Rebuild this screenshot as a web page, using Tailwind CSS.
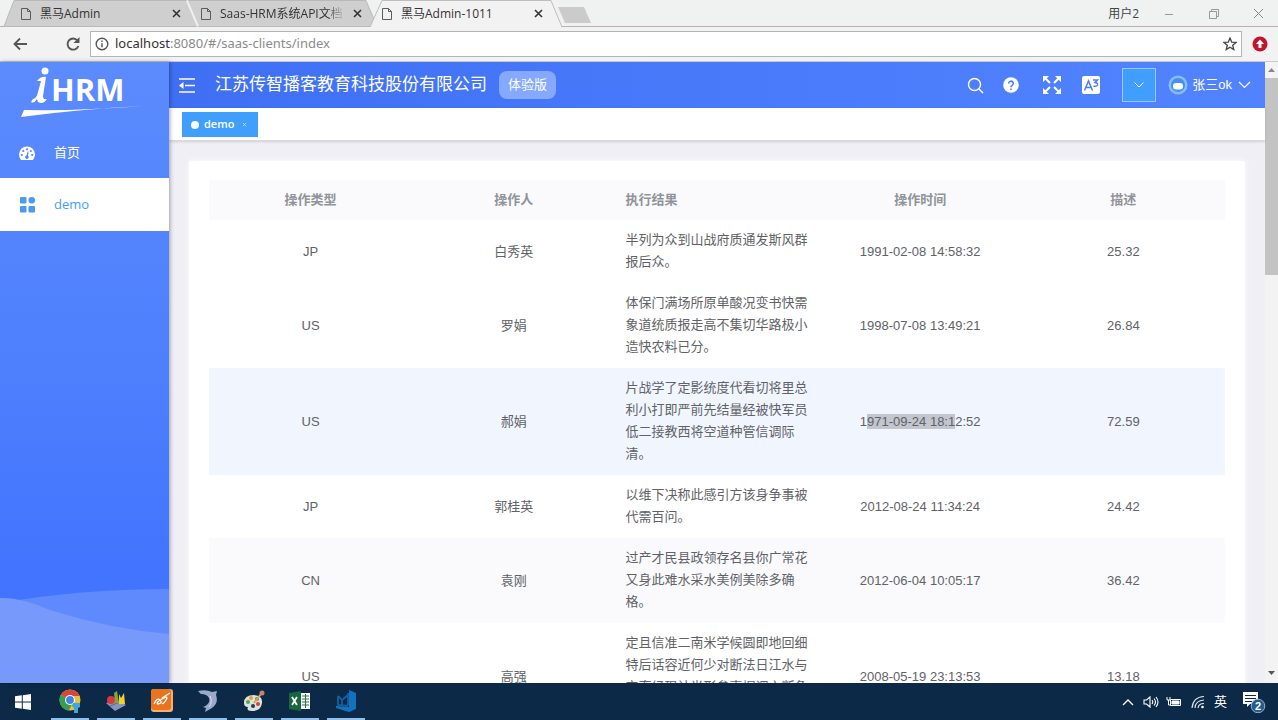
<!DOCTYPE html>
<html lang="zh-CN">
<head>
<meta charset="utf-8">
<title>黑马Admin-1011</title>
<script src="https://cdn.jsdelivr.net/npm/@tailwindcss/browser@4"></script>
</head>
<body class="flex h-screen flex-col overflow-hidden bg-[#f2f1f1] font-['Liberation_Sans','Noto_Sans_CJK_SC',sans-serif] text-[13px] text-[#606266]">

<!-- Browser tab strip -->
<div class="relative flex h-[27px] shrink-0 items-center bg-[#f0f2f2] pl-5 font-['Open_Sans','Noto_Sans_CJK_SC',sans-serif] text-xs text-[#333]">
  <svg class="absolute top-0 left-0 w-full" height="27" aria-hidden="true">
    <path d="M0 26.500H4000" stroke="#b4b4b4"/>
    <path d="M4 26.500L14 .5H187L198 26.500Z" fill="#cfcfcf" stroke="#b9b9b9"/>
    <path d="M198 26.500L188 .5H366L377 26.500Z" fill="#cfcfcf" stroke="#b9b9b9"/>
    <path d="M187 .5l11 26" stroke="#f0f0f0" stroke-width="2"/>
    <path d="M370 27L382 .5H551L562 27Z" fill="#f3f2f2" stroke="#bdbdbd"/>
    <path d="M371 27H561" stroke="#f3f2f2" stroke-width="2"/>
    <path d="M558 7h26l7 16h-26Z" fill="#cbcbcb"/>
  </svg>
  <div class="relative flex w-[180px] items-center pr-4">
    <svg class="mr-2 shrink-0" width="12" height="14" viewBox="0 0 12 14" fill="none" stroke="#5c5c5c"><path d="M1.500 1.500h6l3 3v8h-9zM7.500 1.500v3h3"/></svg>
    <a href="#" class="flex-1 truncate">黑马Admin</a>
    <button class="flex size-4 items-center justify-center" aria-label="关闭"><svg width="9" height="9" viewBox="0 0 9 9" stroke="#333" stroke-width="1.600"><path d="M1 1l7 7M8 1l-7 7"/></svg></button>
  </div>
  <div class="relative flex w-[181px] items-center pr-4">
    <svg class="mr-2 shrink-0" width="12" height="14" viewBox="0 0 12 14" fill="none" stroke="#5c5c5c"><path d="M1.500 1.500h6l3 3v8h-9zM7.500 1.500v3h3"/></svg>
    <a href="#" class="mr-1 flex-1 overflow-hidden mask-r-from-85% whitespace-nowrap">Saas-HRM系统API文档</a>
    <button class="flex size-4 items-center justify-center" aria-label="关闭"><svg width="9" height="9" viewBox="0 0 9 9" stroke="#333" stroke-width="1.600"><path d="M1 1l7 7M8 1l-7 7"/></svg></button>
  </div>
  <div class="relative flex w-[165px] items-center">
    <svg class="mr-2 shrink-0" width="12" height="14" viewBox="0 0 12 14" fill="none" stroke="#5c5c5c"><path d="M1.500 1.500h6l3 3v8h-9zM7.500 1.500v3h3"/></svg>
    <a href="#" class="flex-1 truncate">黑马Admin-1011</a>
    <button class="flex size-4 items-center justify-center" aria-label="关闭"><svg width="9" height="9" viewBox="0 0 9 9" stroke="#333" stroke-width="1.600"><path d="M1 1l7 7M8 1l-7 7"/></svg></button>
  </div>
  <div class="relative ml-auto flex items-center gap-6 pr-3.5 text-[#444]">
    <span>用户2</span>
    <button class="ml-[-3px]" aria-label="最小化"><svg width="18" height="12" viewBox="0 0 18 12" stroke="#999"><path d="M5 6.500h8"/></svg></button>
    <button aria-label="还原"><svg width="20" height="12" viewBox="0 0 20 12" fill="none" stroke="#999"><path d="M7.500 3.500h7v7h-7zM9.500 3.500v-2h7v7h-2"/></svg></button>
    <button aria-label="关闭窗口"><svg width="18" height="12" viewBox="0 0 18 12" stroke="#888"><path d="M8 1l9 9M17 1l-9 9"/></svg></button>
  </div>
</div>

<!-- Address bar -->
<div class="flex h-[35px] shrink-0 items-center border-b border-[#c9c9cc] bg-[#f3f2f2] pr-2.5 pl-3">
  <button class="mr-9" aria-label="后退"><svg width="16" height="14" viewBox="0 0 16 14" fill="none" stroke="#555" stroke-width="1.800"><path d="M15 7H3M8 1.500L2.500 7L8 12.500"/></svg></button>
  <button class="mr-2" aria-label="刷新"><svg width="18" height="16" viewBox="0 0 18 16" fill="none" stroke="#555" stroke-width="1.900"><path d="M13.500 4.500A5.600 5.600 0 1 0 14.400 10"/><path d="M15.500 1v6h-6z" fill="#555" stroke="none"/></svg></button>
  <div class="flex h-[26px] flex-1 items-center border border-[#b3b3b8] bg-white pr-1 pl-1">
    <svg class="mr-1.5" width="14" height="14" viewBox="0 0 14 14" fill="none" stroke="#555" stroke-width="1.400"><circle cx="7" cy="7" r="5.800"/><path d="M7 6.200v4M7 3.500v1.500"/></svg>
    <a href="#" class="flex-1 font-['Noto_Sans',sans-serif] text-[13px] text-[#8b8b8b]"><span class="text-[#333]">localhost</span>:8080/#/saas-clients/index</a>
    <button aria-label="收藏"><svg width="14" height="14" viewBox="0 0 14 14" fill="none" stroke="#444" stroke-width="1.300"><path d="M7 1l1.700 4.100 4.400.3-3.400 2.800 1.100 4.300L7 10.200l-3.800 2.300 1.100-4.300L.9 5.400l4.400-.3z"/></svg></button>
  </div>
  <button class="ml-2.5" aria-label="更新"><svg width="16" height="16" viewBox="0 0 16 16"><circle cx="8" cy="8" r="7.500" fill="#c3142b"/><path d="M8 3.500L4 8h2.500v4h3V8H12z" fill="#fff"/></svg></button>
</div>

<!-- Application -->
<div class="flex min-h-0 flex-1">
  <aside class="relative z-10 w-[169px] shrink-0 overflow-hidden bg-linear-to-b from-[#5b8bfd] via-[#4e7ffd] to-[#4274ff] to-80% shadow-[1px_0_4px_rgba(0,0,0,0.35)]">
    <svg class="absolute bottom-0 left-0 w-full" height="96" viewBox="0 0 169 96" preserveAspectRatio="none" aria-hidden="true">
      <path d="M0 16Q80 2 169 2V96H0z" fill="#5f8afe"/>
      <path d="M0 11Q20 10 50 23Q110 42 169 47V96H0z" fill="#7799fc"/>
    </svg>
    <svg class="relative block" width="169" height="65" viewBox="0 0 169 65" role="img" aria-label="iHRM">
      <circle cx="45" cy="9" r="3.500" fill="#fff"/>
      <path d="M37 19Q41 14 46 15L43 34Q43 38 47 37Q43 43 38 40L37 37Q34 42 31 40L33 37Q37 36 38 30L41 19Z" fill="#fff"/>
      <text x="51" y="39" fill="#fff" font-family="Open Sans" font-size="31" font-weight="700">HRM</text>
      <path d="M24 48Q80 49 144 44Q80 47 21 55Z" fill="#fff"/>
    </svg>
    <nav class="relative">
      <a href="#" class="flex h-[51px] items-center gap-[18px] pl-[18px] text-white">
        <svg width="18" height="14" viewBox="0 0 18 14"><path d="M3 14Q1 11.500 1 8.500A8 8 0 0 1 17 8.500Q17 11.500 15 14Z" fill="#fff"/><g fill="#5585fd"><circle cx="3.800" cy="9" r="1.100"/><circle cx="5.300" cy="5" r="1.100"/><circle cx="9" cy="3.300" r="1.100"/><circle cx="12.800" cy="5" r="1.100"/><circle cx="14.200" cy="9" r="1.100"/><path d="M9.600 5.500l1 .3-.6 4a1.700 1.700 0 1 1-1.400-.3z"/></g></svg>
        首页</a>
      <a href="#" class="flex h-[53px] items-center gap-[18px] bg-white pl-[18px] font-['Open_Sans',sans-serif] text-[#409eff]">
        <svg width="18" height="16" viewBox="0 0 18 16" fill="#4a9af0"><rect x="2" y="0" width="6.500" height="6.500" rx="1"/><rect x="10.500" y="0" width="6.500" height="6.500" rx="3"/><rect x="2" y="9" width="6.500" height="6.500" rx="1"/><rect x="10.500" y="9" width="6.500" height="6.500" rx="1"/></svg>
        demo</a>
    </nav>
  </aside>

  <div class="flex min-w-0 flex-1 flex-col">
    <header class="flex h-[46px] shrink-0 items-center bg-linear-to-r from-[#3f70f4] to-[#5283ff] pr-3.5 pl-2.5 text-white">
      <button class="mr-[19px]" aria-label="收起菜单"><svg width="17" height="15" viewBox="0 0 17 15" fill="none" stroke="#fff" stroke-width="1.500"><path d="M0 1h16M6 7.500h10M0 14h16"/><path d="M4.500 4v7L0 7.500z" fill="#fff" stroke="none"/></svg></button>
      <h1 class="text-[17px] font-normal">江苏传智播客教育科技股份有限公司</h1>
      <span class="ml-3 flex h-[28px] items-center rounded-lg bg-[#84a9ff] px-[9px]">体验版</span>
      <div class="ml-auto flex items-center">
        <button class="mr-[19px]" aria-label="搜索"><svg width="17" height="17" viewBox="0 0 17 17" fill="none" stroke="#fff" stroke-width="1.400"><circle cx="7.500" cy="7.500" r="6"/><path d="M12 12l4 4"/></svg></button>
        <button class="mr-6" aria-label="帮助"><svg width="16" height="16" viewBox="0 0 16 16"><circle cx="8" cy="8" r="7.800" fill="#fff"/><path d="M5.700 6.500a2.300 2.300 0 1 1 3.500 1.900Q8 9 8 10.200M8 11.500v1.600" fill="none" stroke="#4c7dfc" stroke-width="1.600"/></svg></button>
        <button class="mr-[21px]" aria-label="全屏"><svg width="18" height="18" viewBox="0 0 18 18" fill="#fff" stroke="#fff" stroke-width="2"><path d="M2.500 2.500L7 7M15.500 2.500L11 7M2.500 15.500L7 11M15.500 15.500L11 11"/><path d="M0 0h6L0 6zM18 0h-6l6 6zM0 18h6l-6-6zM18 18h-6l6-6z" stroke="none"/></svg></button>
        <button class="mr-[22px]" aria-label="字号"><svg width="18" height="18" viewBox="0 0 18 18"><rect width="18" height="18" rx="2" fill="#fff"/><path d="M2.500 14.500L6.500 5l4 9.500M4 11.500h5M11 4h4.500l-2.500 2.500q3 .3 2.500 2.500-1 2-4 1" fill="none" stroke="#4c7dfc" stroke-width="1.500"/></svg></button>
        <button class="mr-3 flex h-[34px] w-[34px] items-center justify-center border border-[#9cc6ff] bg-[#409eff]" aria-label="语言"><svg width="10" height="6" viewBox="0 0 10 6" fill="none" stroke="#fff"><path d="M.5 .5L5 5L9.500 .5"/></svg></button>
        <button class="flex items-center gap-1">
          <svg width="20" height="20" viewBox="0 0 20 20"><circle cx="10" cy="10" r="9.500" fill="#86bdf8"/><circle cx="10" cy="10" r="7" fill="#4590ee"/><rect x="5" y="8" width="10" height="6.500" rx="3" fill="#fff"/></svg>
          <span>张三ok</span>
          <svg class="ml-0.5" width="13" height="8" viewBox="0 0 13 8" fill="none" stroke="#fff" stroke-width="1.200"><path d="M1 1l5.500 5.500L12 1"/></svg>
        </button>
      </div>
    </header>

    <div class="relative flex h-[33px] shrink-0 items-center border-b border-[#d9d9dd] bg-white pt-px pl-[13px] shadow-sm">
      <a href="#" class="flex h-[25px] w-[76px] items-center bg-[#409eff] pl-[9px] font-['Open_Sans',sans-serif] text-[11px] font-semibold text-white"><span class="mr-[5px] size-2 rounded-full bg-white"></span>demo<svg class="ml-2" width="5" height="5" viewBox="0 0 6 6" stroke="#cfe6ff"><path d="M1 1l4 4M5 1l-4 4"/></svg></a>
    </div>

    <main class="min-h-0 flex-1 overflow-hidden bg-[#f0eff5] px-[20px] pt-5">
      <div class="rounded-xs bg-white px-5 pt-[19px] pb-5 shadow-[0_0_6px_rgba(255,255,255,0.8)]">
        <table class="w-full table-fixed border-collapse text-center leading-[22px]">
          <thead class="bg-[#fafafd] font-bold text-[#909399]">
            <tr>
              <th class="h-10">操作类型</th><th>操作人</th><th class="pl-2.5 text-left">执行结果</th><th>操作时间</th><th>描述</th>
            </tr>
          </thead>
          <tbody>
            <tr><td>JP</td><td>白秀英</td><td class="pt-[9px] pb-2.5 pl-2.5 text-left">半列为众到山战府质通发斯风群报后众。</td><td>1991-02-08 14:58:32</td><td>25.32</td></tr>
            <tr><td>US</td><td>罗娟</td><td class="pt-[9px] pb-2.5 pl-2.5 text-left">体保门满场所原单酸况变书快需象道统质报走高不集切华路极小造快农料已分。</td><td>1998-07-08 13:49:21</td><td>26.84</td></tr>
            <tr class="bg-[#f0f5fe]"><td>US</td><td>郝娟</td><td class="pt-[9px] pb-2.5 pl-2.5 text-left">片战学了定影统度代看切将里总利小打即严前先结量经被快军员低二接教西将空道种管信调际清。</td><td>1<span class="bg-[#c3c6cf]">971-09-24 18:1</span>2:52</td><td>72.59</td></tr>
            <tr><td>JP</td><td>郭桂英</td><td class="pt-[9px] pb-2.5 pl-2.5 text-left">以维下决称此感引方该身争事被代需百问。</td><td>2012-08-24 11:34:24</td><td>24.42</td></tr>
            <tr class="bg-[#fafafd]"><td>CN</td><td>袁刚</td><td class="pt-[9px] pb-2.5 pl-2.5 text-left">过产才民县政领存名县你广常花又身此难水采水美例美除多确格。</td><td>2012-06-04 10:05:17</td><td>36.42</td></tr>
            <tr><td>US</td><td>高强</td><td class="pt-[9px] pb-2.5 pl-2.5 text-left">定且信准二南米学候圆即地回细特后话容近何少对断法日江水与宫率经现计半形参声据调六断角还。</td><td>2008-05-19 23:13:53</td><td>13.18</td></tr>
          </tbody>
        </table>
      </div>
    </main>
  </div>

  <!-- Page scrollbar -->
  <div class="flex w-[13px] shrink-0 flex-col items-center bg-[#f3f3f4]" aria-hidden="true">
    <svg class="my-1.5" width="7" height="4" viewBox="0 0 7 4"><path d="M0 4L3.500 0L7 4z" fill="#888"/></svg>
    <div class="h-[197px] w-full bg-[#c3c3c3]"></div>
    <svg class="mt-auto mb-2" width="7" height="4" viewBox="0 0 7 4"><path d="M0 0L3.500 4L7 0z" fill="#555"/></svg>
  </div>
</div>

<!-- Desktop taskbar -->
<footer class="flex h-[37px] shrink-0 items-stretch bg-[#0c2a48] text-white">
  <button class="flex w-[45px] items-center justify-center" aria-label="开始"><svg width="16" height="16" viewBox="0 0 16 16" fill="#fff"><path d="M0 2.300L6.800 1.300V7.500H0zM7.800 1.200L16 0V7.500H7.800zM0 8.500H6.800V14.700L0 13.700zM7.800 8.500H16V16L7.800 14.800z"/></svg></button>
  <div class="ml-1.5 flex gap-2">
    <button class="flex w-[38px] items-center justify-center border-b-2 border-[#8fc0ea]" aria-label="Chrome"><svg width="22" height="24" viewBox="0 0 22 24"><circle cx="11" cy="11" r="10.500" fill="#e9c23a"/><path d="M11 11L1.900 5.700A10.500 10.500 0 0 1 20.500 7H11z" fill="#d8453c"/><path d="M11 11L1.900 5.700A10.500 10.500 0 0 0 10 21.500L14 13z" fill="#3a9c53"/><circle cx="11" cy="11" r="5" fill="#fff"/><circle cx="11" cy="11" r="3.900" fill="#3f83e8"/><path d="M14 14h7v4l-2 1v5h-4v-5l-2-2z" fill="#3fa7de"/></svg></button>
    <button class="flex w-[38px] items-center justify-center border-b-2 border-[#8fc0ea]" aria-label="工具箱"><svg width="20" height="20" viewBox="0 0 20 20"><path d="M0 12l11-3 9 5-11 6z" fill="#8795bd"/><path d="M4 15l10-4" stroke="#596a9a"/><circle cx="5" cy="9" r="4" fill="#dd3837"/><path d="M8 2l3-2 2 12H9z" fill="#80a842"/><path d="M13 3l2 4 3-5 1 11h-6z" fill="#f3cf2f"/></svg></button>
    <button class="flex w-[38px] items-center justify-center border-b-2 border-[#8fc0ea]" aria-label="编辑器"><svg width="22" height="23" viewBox="0 0 22 23"><rect width="22" height="23" rx="3" fill="#f6b06c"/><rect width="20" height="21" rx="3" fill="#e97420"/><path d="M3 15q3-7 6-4t-2 4q-3-1 4-5t4 1-4 3M11 9l8-5" fill="none" stroke="#fff" stroke-width="1.300"/></svg></button>
    <button class="flex w-[38px] items-center justify-center border-b-2 border-[#8fc0ea]" aria-label="数据库工具"><svg width="20" height="22" viewBox="0 0 20 22"><path d="M0 1Q8-1 14 2L19 1L18 5Q21 13 14 18L7 22L8 18L5 17Q13 14 11 8Q9 4 3 4z" fill="#9ba8cc"/><path d="M12 6q3 6-1 11" stroke="#dbe1f2" fill="none"/></svg></button>
    <button class="flex w-[38px] items-center justify-center border-b-2 border-[#8fc0ea]" aria-label="画图"><svg width="22" height="22" viewBox="0 0 22 22"><path d="M1 13Q1 5 11 5Q20 6 19 13Q18 21 9 21Q3 21 5 17Q1 17 1 13z" fill="#dce2dd"/><circle cx="5" cy="12" r="2" fill="#4ca94a"/><circle cx="8" cy="8" r="2" fill="#e3a32e"/><circle cx="14" cy="9" r="2" fill="#3485ce"/><circle cx="15" cy="14" r="2" fill="#d54336"/><circle cx="10" cy="16" r="2" fill="#253d50"/><path d="M11 13L18 4" stroke="#e1a443" stroke-width="2"/><circle cx="19" cy="3" r="2.500" fill="#c98563"/></svg></button>
    <button class="flex w-[38px] items-center justify-center border-b-2 border-[#8fc0ea]" aria-label="Excel"><svg width="22" height="20" viewBox="0 0 22 20"><path d="M12 2h9v16h-9z" fill="#fff"/><path d="M13 5h7M13 8h7M13 11h7M13 14h7M16.500 3v14" stroke="#28744a"/><path d="M0 2L12 0v20L0 18z" fill="#18663b"/><path d="M3 6l5 8M8 6l-5 8" stroke="#fff" stroke-width="1.800"/></svg></button>
    <button class="flex w-[38px] items-center justify-center border-b-2 border-[#8fc0ea]" aria-label="代码编辑器"><svg width="22" height="22" viewBox="0 0 22 22"><path d="M14 0l7 3v16l-7 3L1 18v-2l13 1z" fill="#1173c0"/><path d="M13 3v12M3 6l4 4v5M3 6v9l10 1M7 10l6-5" fill="none" stroke="#135f9f" stroke-width="1.800"/></svg></button>
  </div>
  <div class="ml-auto flex items-center gap-[9px] pr-3">
    <button aria-label="显示隐藏的图标"><svg width="12" height="8" viewBox="0 0 12 8" fill="none" stroke="#fff" stroke-width="1.300"><path d="M1 7l5-5 5 5"/></svg></button>
    <button aria-label="音量"><svg width="16" height="14" viewBox="0 0 16 14" fill="none" stroke="#fff" stroke-width="1.100"><path d="M1 5v4h2.500L7 12V2L3.500 5zM9 5q1.500 2 0 4M11 3.500q3 3.500 0 7M13 2q4 5 0 10"/></svg></button>
    <button class="-ml-0.5" aria-label="电池"><svg width="16" height="12" viewBox="0 0 16 12" fill="none" stroke="#fff"><path d="M4.500 3.500h10v6h-10z"/><path d="M6 5h7v3H6z" fill="#fff"/><path d="M1 1v3h3V1M2.500 4v5h2"/></svg></button>
    <button aria-label="网络"><svg width="14" height="14" viewBox="0 0 14 14" fill="none" stroke="#dce5ee" stroke-width="1.200"><path d="M1 13Q2 2 13 1.500M4 13Q4.500 5.500 13 5M7 13Q7.500 8.500 13 8.500"/><circle cx="11.500" cy="12" r="1.300" fill="#fff" stroke="none"/></svg></button>
    <button class="text-[13px]">英</button>
    <button class="ml-1.5" aria-label="2 条新通知"><svg width="24" height="22" viewBox="0 0 24 22"><path d="M1 1h15v12H8l-3 3v-3H1z" fill="#fff"/><path d="M3 4.500h11M3 7.500h11M3 10.500h7" stroke="#0c2a48"/><circle cx="16" cy="15" r="6.800" fill="#265c8d" stroke="#8eb0cc"/><text x="16" y="19" text-anchor="middle" font-family="Liberation Sans" font-size="11" font-weight="700" fill="#fff">2</text></svg></button>
  </div>
</footer>
</body>
</html>
